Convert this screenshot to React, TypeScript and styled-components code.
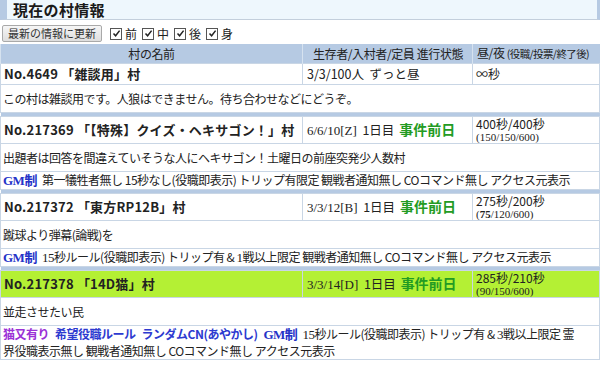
import React from 'react';
import styled, { createGlobalStyle } from 'styled-components';

const GlobalStyle = createGlobalStyle`
	html, body {
		margin: 0;
		padding: 0;
		background: #ffffff;
		overflow: hidden;
	}
	body {
		font-family: 'Noto Sans CJK JP', 'Liberation Sans', sans-serif;
		font-size: 12px;
		color: #222222;
	}
`;

const Page = styled.div`
	width: 600px;
	height: 365px;
	overflow: hidden;
`;

const TitleBar = styled.h2`
	margin: 0;
	height: 20px;
	box-sizing: border-box;
	border-left: 7px solid #b6cae3;
	border-right: 3px solid #b6cae3;
	border-bottom: 1px solid #c3cfdc;
	background: #eef7fd;
	padding-left: 6px;
	font-size: 15px;
	font-weight: 700;
	line-height: 19px;
	letter-spacing: 0.3px;
	color: #1a1a1a;
`;

const Toolbar = styled.div`
	display: flex;
	align-items: center;
	height: 21px;
	padding: 3px 0 0 2px;
	gap: 8px;
`;

const RefreshButton = styled.button`
	height: 17px;
	padding: 0 5px;
	border: 1px solid #a9a9a9;
	border-radius: 2px;
	background: linear-gradient(#f6f6f6, #dedede);
	font-family: 'Noto Sans CJK JP', sans-serif;
	font-size: 11px;
	line-height: 15px;
	color: #333333;
`;

const CheckGroup = styled.div`
	display: flex;
	gap: 5px;
	align-items: center;
`;

const CheckLabel = styled.label`
	display: flex;
	align-items: center;
	gap: 3px;
	font-size: 12px;
	line-height: 16px;
`;

const Box = styled.span`
	width: 10px;
	height: 10px;
	border: 1px solid #555555;
	background: #ffffff;
	display: inline-flex;
	align-items: center;
	justify-content: center;
`;

const Table = styled.table`
	width: 599px;
	border-collapse: collapse;
	table-layout: fixed;
`;

const HeadCell = styled.th<{ $align?: string; $pad?: number }>`
	background: #b6cae3;
	height: 19px;
	padding: 0 0 0 ${(p) => p.$pad || 0}px;
	font-weight: 400;
	font-size: 12px;
	line-height: 16px;
	text-align: ${(p) => p.$align || 'center'};
	border-left: 1px solid #d6e2ef;
	white-space: nowrap;
	overflow: hidden;
	color: #222222;
	letter-spacing: -0.4px;
`;

const HeadSmall = styled.span`
	font-size: 10.5px;
	letter-spacing: -0.6px;
`;

const Cell = styled.td<{ $green?: boolean }>`
	border: 1px solid #c9d6e5;
	padding: 0 3px;
	background: ${(p) => (p.$green ? '#b4f034' : '#ffffff')};
	vertical-align: middle;
	white-space: nowrap;
	overflow: hidden;
`;

const NameCell = styled(Cell)<{ $tall?: boolean }>`
	height: ${(p) => (p.$tall ? '26px' : '20px')};
	font-weight: 700;
	font-size: 13px;
	line-height: 16px;
	letter-spacing: 0.2px;
`;

const StatusCell = styled(Cell)`
	padding-left: 4px;
	font-size: 12.5px;
	line-height: 16px;
`;

const Serif = styled.span`
	font-family: 'Liberation Serif', 'Noto Sans CJK JP', serif;
	font-size: 13px;
	line-height: inherit;
`;

const Incident = styled.span`
	color: #239b23;
	font-weight: 700;
	font-size: 14px;
	line-height: 16px;
	margin-left: 2px;
`;

const TimeCell = styled(Cell)`
	padding: 0 0 0 3px;
`;

const TimeMain = styled.div`
	font-size: 12px;
	line-height: 14px;
`;

const TimeSub = styled.div`
	font-family: 'Liberation Serif', serif;
	font-size: 11px;
	line-height: 12px;
`;

const WideCell = styled.td<{ $h: number }>`
	border: 1px solid #c9d6e5;
	height: ${(p) => p.$h}px;
	padding: 0 2px;
	font-size: 12px;
	line-height: 16px;
	white-space: nowrap;
	overflow: hidden;
	letter-spacing: -0.5px;
`;

const Band = styled.td`
	background: #b6cae3;
	height: 3px;
	padding: 0;
	border: 0;
`;

const Gm = styled.span`
	font-family: 'Liberation Serif', 'Noto Sans CJK JP', serif;
	font-weight: 700;
	color: #2533c8;
	font-size: 13px;
	line-height: 16px;
	margin-right: 3px;
`;

const Tag = styled.span<{ $color: string }>`
	font-weight: 700;
	color: ${(p) => p.$color};
	line-height: 16px;
	margin-right: 6px;
`;

type Village = {
	name: string;
	status: React.ReactNode;
	time: React.ReactNode;
	sub?: React.ReactNode;
	desc: string;
	options?: React.ReactNode;
	optionsHeight?: number;
	green?: boolean;
};

const villages: Village[] = [
	{
		name: 'No.4649 「雑談用」村',
		status: <>3/3/100人&nbsp; ずっと昼</>,
		time: <>∞秒</>,
		desc: 'この村は雑談用です。人狼はできません。待ち合わせなどにどうぞ。',
	},
	{
		name: 'No.217369 「【特殊】クイズ・ヘキサゴン！」村',
		status: (
			<>
				<Serif>6/6/10[Z]</Serif>&nbsp; 1日目 <Incident>事件前日</Incident>
			</>
		),
		time: <>400秒/400秒</>,
		sub: <>(150/150/600)</>,
		desc: '出題者は回答を間違えていそうな人にヘキサゴン！土曜日の前座突発少人数村',
		options: (
			<>
				<Gm>GM制</Gm> 第一犠牲者無し 15秒なし(役職即表示) トリップ有限定 観戦者通知無し COコマンド無し アクセス元表示
			</>
		),
		optionsHeight: 17,
	},
	{
		name: 'No.217372 「東方RP12B」村',
		status: (
			<>
				<Serif>3/3/12[B]</Serif>&nbsp; 1日目 <Incident>事件前日</Incident>
			</>
		),
		time: <>275秒/200秒</>,
		sub: (
			<>
				(<b>75</b>/120/600)
			</>
		),
		desc: '蹴球より弾幕(論戦)を',
		options: (
			<>
				<Gm>GM制</Gm> <Serif>15</Serif>秒ルール(役職即表示) トリップ有 &amp; <Serif>1</Serif>戦以上限定 観戦者通知無し COコマンド無し アクセス元表示
			</>
		),
		optionsHeight: 16,
	},
	{
		name: 'No.217378 「14D猫」村',
		status: (
			<>
				<Serif>3/3/14[D]</Serif>&nbsp; 1日目 <Incident>事件前日</Incident>
			</>
		),
		time: <>285秒/210秒</>,
		sub: <>(90/150/600)</>,
		desc: '並走させたい民',
		options: (
			<>
				<Tag $color='#9b32d6'>猫又有り</Tag>
				<Tag $color='#2d3ad0'>希望役職ルール</Tag>
				<Tag $color='#2d3ad0'>ランダムCN(あやかし)</Tag>
				<Gm>GM制</Gm> <Serif>15</Serif>秒ルール(役職即表示) トリップ有 &amp; <Serif>3</Serif>戦以上限定 霊
				<br />
				界役職表示無し 観戦者通知無し COコマンド無し アクセス元表示
			</>
		),
		optionsHeight: 33,
		green: true,
	},
];

function CheckItem({ label }: { label: string }) {
	return (
		<CheckLabel>
			<Box>
				<svg width='9' height='9' viewBox='0 0 9 9'>
					<path d='M1.5 4.5 L3.6 6.8 L7.6 1.6' fill='none' stroke='#222' strokeWidth='1.5' />
				</svg>
			</Box>
			{label}
		</CheckLabel>
	);
}

export default function App() {
	return (
		<Page>
			<GlobalStyle />
			<TitleBar>現在の村情報</TitleBar>
			<Toolbar>
				<RefreshButton>最新の情報に更新</RefreshButton>
				<CheckGroup>
					{['前', '中', '後', '身'].map((l) => (
						<CheckItem key={l} label={l} />
					))}
				</CheckGroup>
			</Toolbar>
			<Table>
				<colgroup>
					<col style={{ width: '302px' }} />
					<col style={{ width: '170px' }} />
					<col style={{ width: '127px' }} />
				</colgroup>
				<thead>
					<tr>
						<HeadCell>村の名前</HeadCell>
						<HeadCell $align='left' $pad={10}>
							生存者/入村者/定員 進行状態
						</HeadCell>
						<HeadCell $align='left' $pad={4}>
							昼/夜 <HeadSmall>(役職/投票/終了後)</HeadSmall>
						</HeadCell>
					</tr>
				</thead>
				<tbody>
					{villages.map((v, i) => (
						<React.Fragment key={v.name}>
							{i > 0 && (
								<tr>
									<Band colSpan={3} />
								</tr>
							)}
							<tr>
								<NameCell $green={v.green} $tall={!!v.sub}>
									{v.name}
								</NameCell>
								<StatusCell $green={v.green}>{v.status}</StatusCell>
								<TimeCell $green={v.green}>
									<TimeMain>{v.time}</TimeMain>
									{v.sub && <TimeSub>{v.sub}</TimeSub>}
								</TimeCell>
							</tr>
							<tr>
								<WideCell colSpan={3} $h={27}>
									{v.desc}
								</WideCell>
							</tr>
							{v.options && (
								<tr>
									<WideCell colSpan={3} $h={v.optionsHeight || 17}>
										{v.options}
									</WideCell>
								</tr>
							)}
						</React.Fragment>
					))}
				</tbody>
			</Table>
		</Page>
	);
}
